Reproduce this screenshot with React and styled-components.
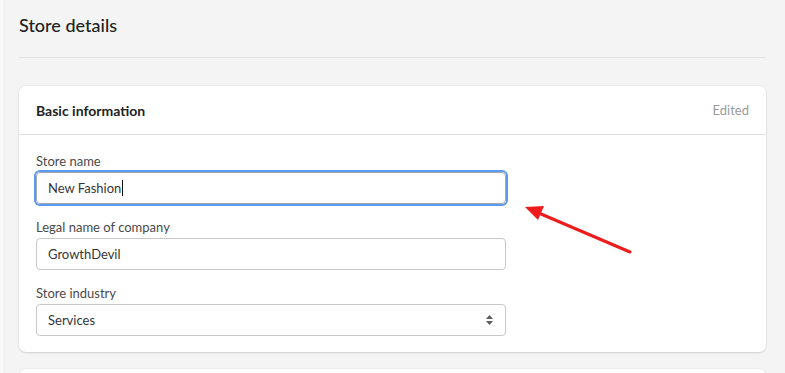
import React from 'react';
import styled, { createGlobalStyle } from 'styled-components';

const GlobalStyle = createGlobalStyle`
  html, body {
    margin: 0;
    padding: 0;
    background: #f4f4f4;
  }
  body {
    font-family: Lato, "Open Sans", "Noto Sans", sans-serif;
    color: #303030;
    overflow: hidden;
  }
`;

const Page = styled.div`
  position: relative;
  width: 785px;
  height: 373px;
  overflow: hidden;
  box-sizing: border-box;
  border-left: 3px solid #fafafa;
  padding: 0 19px 0 16px;
`;

const Title = styled.h1`
  margin: 0;
  padding-top: 14px;
  height: 58px;
  box-sizing: border-box;
  font-size: 18px;
  font-weight: 500;
  color: #202223;
  border-bottom: 1px solid #e3e3e3;
`;

const Stack = styled.div`
  display: flex;
  flex-direction: column;
  gap: 17px;
  padding-top: 28px;
`;

const Card = styled.section`
  background: #fff;
  border-radius: 7px;
  box-shadow: 0 1px 2px rgba(0, 0, 0, 0.12), 0 0 0 1px rgba(0, 0, 0, 0.03);
  min-height: ${(p) => (p.$stub ? '40px' : 'auto')};
`;

const CardHeader = styled.header`
  display: flex;
  align-items: center;
  justify-content: space-between;
  height: 48px;
  padding: 0 17px;
  border-bottom: 1px solid #e1e1e1;
`;

const CardTitle = styled.h2`
  margin: 0;
  font-size: 14px;
  font-weight: 700;
  color: #202223;
`;

const Status = styled.span`
  font-size: 13px;
  color: #9a9a9a;
`;

const CardBody = styled.div`
  display: flex;
  flex-direction: column;
  gap: 14px;
  padding: 17px 17px 16px;
`;

const Field = styled.label`
  display: flex;
  flex-direction: column;
  gap: 2px;
  width: 470px;
`;

const Label = styled.span`
  font-size: 13px;
  line-height: 18px;
  color: #4a4a4a;
`;

const Control = styled.div`
  position: relative;
  display: flex;
  align-items: center;
  height: 32px;
  box-sizing: border-box;
  padding: 0 11px;
  border: 1px solid ${(p) => (p.$focused ? '#a8a8a8' : '#c8c8c8')};
  border-radius: 4px;
  font-size: 13px;
  color: #363636;
  box-shadow: ${(p) => (p.$focused ? '0 0 0 2px #5a9af2' : 'none')};
`;

const Caret = styled.span`
  display: inline-block;
  width: 1px;
  height: 16px;
  background: #111;
  margin-left: 1px;
`;

const SelectArrows = styled.svg`
  position: absolute;
  right: 12px;
  top: 50%;
  transform: translateY(-50%);
`;

const Annotation = styled.svg`
  position: absolute;
  left: 0;
  top: 0;
  pointer-events: none;
`;

export default function App() {
  return (
    <>
      <GlobalStyle />
      <Page>
        <Title>Store details</Title>
        <Stack>
          <Card>
            <CardHeader>
              <CardTitle>Basic information</CardTitle>
              <Status>Edited</Status>
            </CardHeader>
            <CardBody>
              <Field>
                <Label>Store name</Label>
                <Control $focused>
                  New Fashion<Caret />
                </Control>
              </Field>
              <Field>
                <Label>Legal name of company</Label>
                <Control>GrowthDevil</Control>
              </Field>
              <Field>
                <Label>Store industry</Label>
                <Control>
                  Services
                  <SelectArrows width="7" height="10" viewBox="0 0 7 10">
                    <path d="M3.5 0 L7 4 H0 Z" fill="#5c5c5c" />
                    <path d="M3.5 10 L7 6 H0 Z" fill="#5c5c5c" />
                  </SelectArrows>
                </Control>
              </Field>
            </CardBody>
          </Card>
          <Card $stub />
        </Stack>
        <Annotation width="785" height="373" viewBox="0 0 785 373">
          <line x1="627" y1="252" x2="538" y2="214" stroke="#ee1c1c" strokeWidth="3" strokeLinecap="round" />
          <path d="M522 207 L541 206 L535 220 Z" fill="#ee1c1c" />
        </Annotation>
      </Page>
    </>
  );
}
